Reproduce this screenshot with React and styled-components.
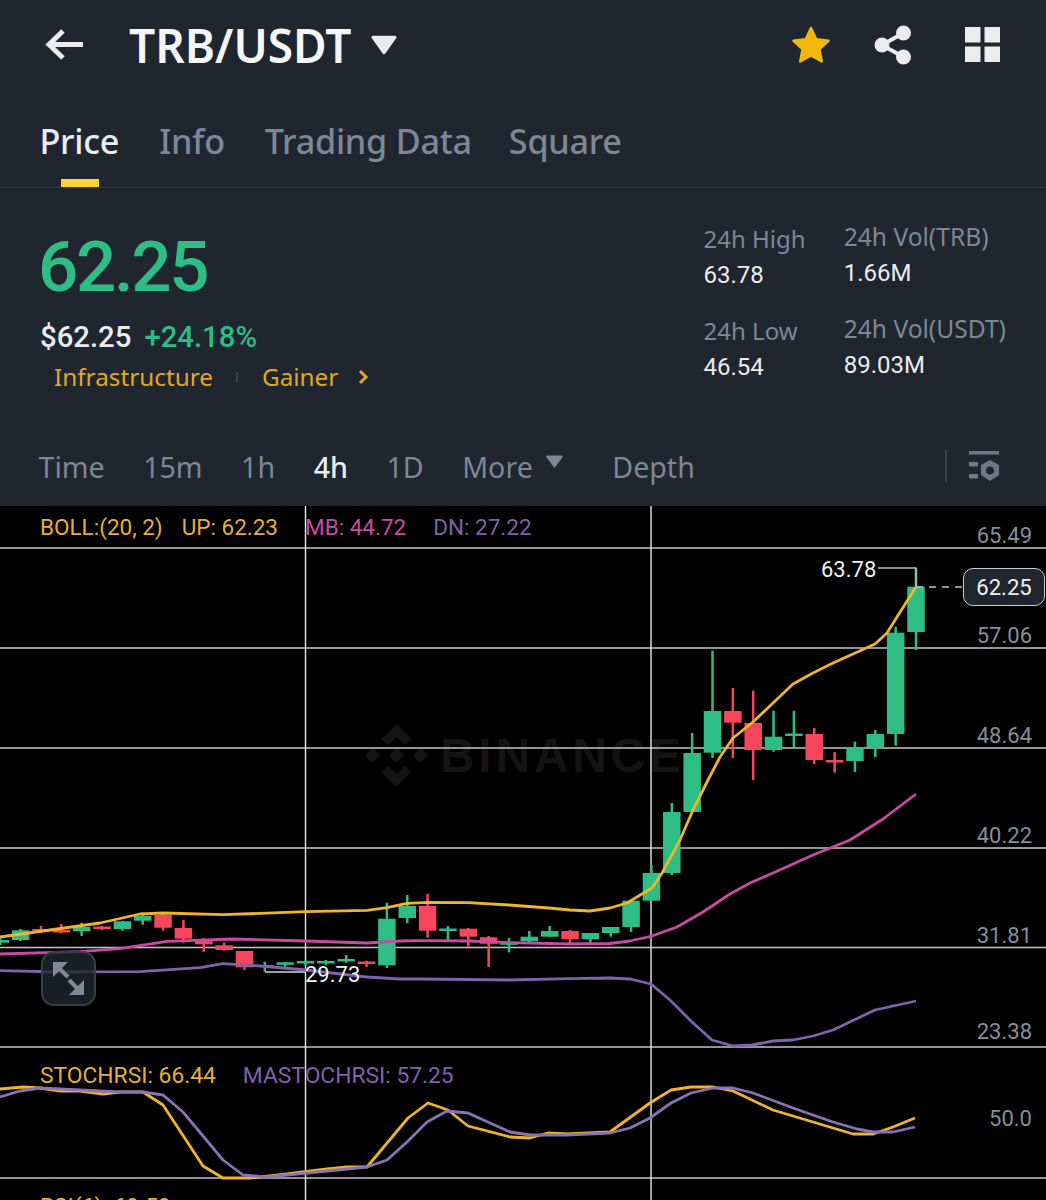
import React from 'react';
import styled, { createGlobalStyle } from 'styled-components';

const GlobalStyle = createGlobalStyle`
  html, body {
    margin: 0;
    padding: 0;
    background: #000;
    font-family: "Noto Sans", "Open Sans", sans-serif;
  }
`;

const Page = styled.div`
  width: 1046px;
  height: 1200px;
  overflow: hidden;
  display: flex;
  flex-direction: column;
`;

const Header = styled.header`
  height: 506px;
  flex: none;
  background: #1f2630;
  display: flex;
  flex-direction: column;
`;

const TopBar = styled.div`
  height: 90px;
  flex: none;
  display: flex;
  align-items: center;
  padding: 0 45px;
  color: #eaecef;
`;

const Title = styled.h1`
  margin: 0 19px 0 46px;
  font-size: 46px;
  font-weight: 600;
  color: #f5f6f8;
`;

const TopActions = styled.div`
  margin-left: auto;
  display: flex;
  align-items: center;
  gap: 43px;
`;

const GridButton = styled.span`
  display: flex;
  margin-left: 10px;
`;

const Tabs = styled.nav`
  height: 98px;
  flex: none;
  box-sizing: border-box;
  display: flex;
  align-items: flex-start;
  gap: 40px;
  padding: 27px 0 0 39.5px;
  border-bottom: 1px solid #353b46;
`;

const Tab = styled.span`
  position: relative;
  margin-left: ${(p) => p.$pull || 0}px;
  font-size: 34.2px;
  line-height: 48px;
  font-weight: 500;
  letter-spacing: -0.25px;
  color: ${(p) => (p.$active ? '#eaecef' : '#7d8796')};

  &::after {
    content: ${(p) => (p.$active ? '""' : 'none')};
    position: absolute;
    left: 21.5px;
    top: 62px;
    width: 38px;
    height: 8px;
    background: #fcd535;
  }
`;

const Summary = styled.section`
  height: 242px;
  flex: none;
  display: flex;
  justify-content: space-between;
  padding: 0 40px;
`;

const PriceBlock = styled.div`
  display: flex;
  flex-direction: column;
  padding-top: 37px;
`;

const BigPrice = styled.div`
  margin-left: -2px;
  font-family: Roboto, "Noto Sans", sans-serif;
  font-size: 71px;
  line-height: 84px;
  font-weight: 500;
  letter-spacing: -2.4px;
  color: #2ebd85;
`;

const SubPrice = styled.div`
  display: flex;
  align-items: baseline;
  gap: 13px;
  margin-top: 9px;
  font-family: Roboto, "Noto Sans", sans-serif;
  font-size: 29.3px;
  line-height: 38px;
  font-weight: 500;
  color: #eaecef;
`;

const Change = styled.span`
  color: #2ebd85;
`;

const TagRow = styled.div`
  display: flex;
  align-items: center;
  margin: 3px 0 0 14px;
  font-size: 24.3px;
  line-height: 36px;
  color: #dfa91f;
`;

const TagDivider = styled.i`
  width: 2px;
  height: 10px;
  margin: 0 24px 0 23px;
  background: #3c434f;
`;

const TagChevron = styled.span`
  display: flex;
  margin-left: 20px;
`;

const Stats = styled.div`
  display: flex;
  gap: 38px;
`;

const StatColumn = styled.div`
  display: flex;
  flex-direction: column;
  gap: 20px;
  padding-top: ${(p) => p.$top}px;
`;

const Stat = styled.div`
  display: flex;
  flex-direction: column;
`;

const StatLabel = styled.span`
  font-size: ${(p) => p.$size || 24}px;
  line-height: 35px;
  color: #7d8796;
`;

const StatValue = styled.span`
  margin-top: 2px;
  font-family: Roboto, "Noto Sans", sans-serif;
  font-size: 24px;
  line-height: 35px;
  color: #eaecef;
`;

const IntervalBar = styled.div`
  flex: 1;
  display: flex;
  align-items: center;
  gap: 38.5px;
  padding: 0 46px 4px 38.5px;
  font-size: 28.6px;
  color: #7d8796;
`;

const Interval = styled.span`
  font-weight: ${(p) => (p.$active ? 500 : 400)};
  color: ${(p) => (p.$active ? '#eaecef' : '#7d8796')};
`;

const MoreInterval = styled(Interval)`
  display: flex;
  align-items: center;
  gap: 13px;
  margin-right: 11px;
`;

const MoreCaret = styled.span`
  display: flex;
  margin-top: -10px;
`;

const BarTools = styled.div`
  margin-left: auto;
  display: flex;
  align-items: center;
  gap: 21px;
`;

const ToolDivider = styled.i`
  width: 2px;
  height: 32px;
  background: #3c434f;
`;

const Chart = styled.section`
  position: relative;
  flex: 1;
  background: #000;
  overflow: hidden;
`;

const Watermark = styled.div`
  position: absolute;
  left: 365px;
  top: 218px;
  display: flex;
  align-items: center;
  gap: 12px;
  color: #141414;
`;

const WatermarkText = styled.span`
  font-family: "Liberation Sans", sans-serif;
  font-size: 48px;
  font-weight: 700;
  letter-spacing: 3.7px;
`;

const ChartCanvas = styled.svg`
  position: absolute;
  inset: 0;
  width: 1046px;
  height: 694px;
`;

const Legend = styled.div`
  position: absolute;
  left: 40px;
  top: ${(p) => p.$top}px;
  display: flex;
  gap: 27px;
  font-family: Roboto, "Noto Sans", sans-serif;
  font-size: ${(p) => p.$size}px;
  line-height: 30px;
  white-space: nowrap;
`;

const LegendItem = styled.span`
  color: ${(p) => p.$color};
  margin-right: ${(p) => p.$pull || 0}px;
`;

const AxisLabel = styled.span`
  position: absolute;
  right: 14px;
  top: ${(p) => p.$y - 506 - 14}px;
  font-family: Roboto, "Noto Sans", sans-serif;
  font-size: 22px;
  line-height: 30px;
  color: #848e9c;
`;

const PriceNote = styled.span`
  position: absolute;
  left: ${(p) => p.$x}px;
  top: ${(p) => p.$y - 506 - 14}px;
  font-family: Roboto, "Noto Sans", sans-serif;
  font-size: 22px;
  line-height: 30px;
  color: #f0f1f2;
`;

const LastPrice = styled.span`
  position: absolute;
  left: 963px;
  top: 62px;
  box-sizing: border-box;
  width: 82px;
  height: 38px;
  display: flex;
  align-items: center;
  justify-content: center;
  border: 1.5px solid #c9ccd1;
  border-radius: 10px;
  background: #1f2630;
  font-family: Roboto, "Noto Sans", sans-serif;
  font-size: 22px;
  color: #f0f1f2;
`;

const ExpandButton = styled.button`
  position: absolute;
  left: 41px;
  top: 445px;
  box-sizing: border-box;
  width: 55px;
  height: 55px;
  padding: 0;
  display: flex;
  align-items: center;
  justify-content: center;
  background: rgba(31, 38, 48, 0.78);
  border: 2px solid #383f4b;
  border-radius: 13px;
`;

// [top of body, bottom of body, wick high, wick low, up?] in page pixels, oldest first
const candles = [
  [940, 942.7, 937, 945, 1],
  [930.3, 940, 929, 941, 1],
  [929, 931.5, 926, 933, 0],
  [930, 932.5, 924, 933.3, 0],
  [927, 931.3, 922.7, 936, 1],
  [926.5, 929, 926, 930, 0],
  [921.3, 929, 921, 930.7, 1],
  [916, 920.7, 912.7, 924.7, 1],
  [915, 927.7, 913, 930.7, 0],
  [928, 938.7, 920, 942.7, 0],
  [939.3, 944.3, 938, 951.7, 0],
  [945.3, 950, 942.7, 950.7, 0],
  [951, 967.3, 951, 970, 0],
  [965, 967, 961.7, 971.7, 1],
  [962.3, 964.8, 962, 967.3, 1],
  [961, 963.5, 960, 965, 1],
  [961, 963.5, 960, 965, 1],
  [959, 961.5, 955, 962.7, 1],
  [961.5, 964, 960.7, 967, 0],
  [918.7, 965.3, 902.7, 968, 1],
  [906, 918, 895, 923, 1],
  [906, 930.7, 894, 937.7, 0],
  [928.5, 931, 926, 940, 1],
  [928.7, 936.7, 928, 946.7, 0],
  [937.3, 943.7, 936, 967, 0],
  [942.3, 944.8, 938, 952.3, 1],
  [936.7, 941.3, 931, 943, 1],
  [931, 936.7, 926, 937, 1],
  [931, 939.3, 930, 945, 0],
  [933, 939.3, 933, 945, 1],
  [927, 933, 927, 936.7, 1],
  [900.7, 927, 900.7, 932, 1],
  [873, 900.7, 865, 900.7, 1],
  [812, 873, 803, 875, 1],
  [753, 812, 733, 812, 1],
  [711, 752.7, 650.7, 758, 1],
  [711, 722.7, 688, 758, 0],
  [723, 750, 690.7, 780, 0],
  [736.7, 750, 710.7, 751.7, 1],
  [733.5, 736, 710.7, 747, 1],
  [734, 760, 728, 764, 0],
  [760, 762.5, 752, 772.7, 0],
  [747.7, 761, 741.7, 772, 1],
  [734, 747.7, 730, 757, 1],
  [632.7, 734, 626.7, 745.7, 1],
  [586.7, 632, 568, 650, 1],
];

const upperBand = '0,937 50,930 100,923 140,914 163,913 223,914.7 306,911.7 367,910.3 387,907.7 407,903.3 428,902.3 468,902.7 509,905 549,908 570,910 590,911 610,908 627,903 652,888 662,873 680,840 693,810 708,780 720,757 733,738 753,722 773,703 793,684 813,673 833,663 853,654 875,644 887,633 897,617 916,587';
const midBand = '0,954 80,951.7 120,948.7 167,941.3 233,939 306,941 367,943 400,941 420,940.7 470,941 510,942.7 570,944 610,943.5 630,941 652,936 677,927 703,912 730,894 750,883 773,873 813,855 850,840 883,819 916,794';
const lowerBand = '0,970.7 60,972 140,971.7 200,967.7 223,963.7 260,966 306,970 367,977 400,979 420,979 509,980 570,978.7 610,978 630,979 651,984 670,1000 692,1022 712,1040 733,1046 752,1045 773,1041 793,1040 813,1036 833,1030 875,1010 916,1001';
const stochLine = '0,1089 23,1087 40,1088 60,1091 80,1091 103,1094 120,1092 143,1092 163,1105 203,1166 223,1178 250,1178 287,1174 327,1169 347,1167 367,1167 408,1118 428,1103 448,1110 468,1126 510,1137 530,1138 548,1133 567,1134 610,1132 650,1103 671,1090 691,1087 713,1087 733,1091 773,1110 813,1122 853,1134 873,1134 893,1127 915,1118';
const stochAvgLine = '0,1097 20,1091 40,1088 80,1090 120,1092 143,1092 163,1095 183,1112 223,1160 243,1175 267,1177 307,1173 367,1167 387,1160 407,1142 427,1122 447,1111 468,1113 510,1132 530,1135 567,1135 610,1133 630,1128 650,1118 671,1103 691,1093 713,1088 733,1088 753,1093 793,1108 833,1122 857,1129 873,1132 893,1132 915,1127';

const gridRows = [548, 648, 748, 848, 947.5, 1047, 1178];
const gridColumns = [305.5, 651];
const axisLabels = [
  ['65.49', 535],
  ['57.06', 635],
  ['48.64', 735],
  ['40.22', 835],
  ['31.81', 935],
  ['23.38', 1031],
  ['50.0', 1118],
];

const BackIcon = () => (
  <svg width="38" height="32" viewBox="0 0 38 32" fill="none" stroke="currentColor" strokeWidth="5">
    <path d="M38 15.5H4" />
    <path d="M18 2 4 15.5 18 29" />
  </svg>
);

const Caret = ({ width, height, color }) => (
  <svg width={width} height={height} viewBox="0 0 24 18">
    <path d="M2 2h20L12 16z" fill={color} stroke={color} strokeWidth="3" strokeLinejoin="round" />
  </svg>
);

const StarIcon = () => (
  <svg width="40" height="40" viewBox="0 0 40 40">
    <path
      d="M20 3l5.2 11.3 12.3 1.5-9.1 8.4 2.4 12.2L20 30.3 9.2 36.4l2.4-12.2-9.1-8.4 12.3-1.5z"
      fill="#f0b90b"
      stroke="#f0b90b"
      strokeWidth="2.5"
      strokeLinejoin="round"
    />
  </svg>
);

const ShareIcon = () => (
  <svg width="38" height="40" viewBox="0 0 38 40" fill="#eaecef" stroke="#eaecef">
    <circle cx="8" cy="20" r="7.5" stroke="none" />
    <circle cx="29.5" cy="8" r="7.5" stroke="none" />
    <circle cx="29.5" cy="32" r="7.5" stroke="none" />
    <path d="M8 20 29.5 8M8 20l21.5 12" strokeWidth="4" fill="none" />
  </svg>
);

const GridIcon = () => (
  <svg width="36" height="36" viewBox="0 0 36 36" fill="#eaecef">
    <rect x="0" y="0" width="15.5" height="15.5" />
    <rect x="19.5" y="0" width="15.5" height="15.5" />
    <rect x="0" y="19.5" width="15.5" height="15.5" />
    <rect x="19.5" y="19.5" width="15.5" height="15.5" />
  </svg>
);

const ChevronIcon = () => (
  <svg width="12" height="16" viewBox="0 0 12 16" fill="none" stroke="#dfa91f" strokeWidth="3">
    <path d="M2 2l6 6-6 6" />
  </svg>
);

const IndicatorIcon = () => (
  <svg width="32" height="32" viewBox="0 0 32 32" fill="#6f7885">
    <rect x="1" y="1" width="30" height="3.5" />
    <rect x="1" y="12" width="9" height="4.5" />
    <rect x="1" y="24" width="9" height="4.5" />
    <path fillRule="evenodd" d="M22 10l9 5v10l-9 6-9-6V15zM22 16.5a4 4 0 1 0 0 8 4 4 0 0 0 0-8z" />
  </svg>
);

const ExpandIcon = () => (
  <svg width="36" height="36" viewBox="0 0 36 36" fill="#7e8896" stroke="#7e8896">
    <path d="M2 1h15L2 16z" stroke="none" />
    <path d="M33 34H18L33 19z" stroke="none" />
    <path d="M8 7l9 9M27 28l-9-9" strokeWidth="4" fill="none" />
  </svg>
);

const BinanceMark = () => (
  <svg width="63" height="63" viewBox="0 0 63 63" fill="#141414">
    <path d="M31.5 0 46.5 15 40 21.5 31.5 13 23 21.5 16.5 15z" />
    <path d="M31.5 63 46.5 48 40 41.5 31.5 50 23 41.5 16.5 48z" />
    <path d="M31.5 24 39 31.5 31.5 39 24 31.5z" />
    <path d="M7.5 24 15 31.5 7.5 39 0 31.5z" />
    <path d="M55.5 24 63 31.5 55.5 39 48 31.5z" />
  </svg>
);

const Band = ({ points, color }) => (
  <polyline points={points} fill="none" stroke={color} strokeWidth="2.8" strokeLinejoin="round" />
);

const App = () => {
  const firstX = 916 - 20.35 * (candles.length - 1);

  return (
    <Page>
      <GlobalStyle />
      <Header>
        <TopBar>
          <BackIcon />
          <Title>TRB/USDT</Title>
          <Caret width={26} height={20} color="#eaecef" />
          <TopActions>
            <StarIcon />
            <ShareIcon />
            <GridButton>
              <GridIcon />
            </GridButton>
          </TopActions>
        </TopBar>

        <Tabs>
          <Tab $active>Price</Tab>
          <Tab>Info</Tab>
          <Tab>Trading Data</Tab>
          <Tab $pull={-3}>Square</Tab>
        </Tabs>

        <Summary>
          <PriceBlock>
            <BigPrice>62.25</BigPrice>
            <SubPrice>
              $62.25 <Change>+24.18%</Change>
            </SubPrice>
            <TagRow>
              Infrastructure
              <TagDivider />
              Gainer
              <TagChevron>
                <ChevronIcon />
              </TagChevron>
            </TagRow>
          </PriceBlock>
          <Stats>
            <StatColumn $top={33}>
              <Stat>
                <StatLabel>24h High</StatLabel>
                <StatValue>63.78</StatValue>
              </Stat>
              <Stat>
                <StatLabel>24h Low</StatLabel>
                <StatValue>46.54</StatValue>
              </Stat>
            </StatColumn>
            <StatColumn $top={31}>
              <Stat>
                <StatLabel $size={24.6}>24h Vol(TRB)</StatLabel>
                <StatValue>1.66M</StatValue>
              </Stat>
              <Stat>
                <StatLabel $size={24.6}>24h Vol(USDT)</StatLabel>
                <StatValue>89.03M</StatValue>
              </Stat>
            </StatColumn>
          </Stats>
        </Summary>

        <IntervalBar>
          <Interval>Time</Interval>
          <Interval>15m</Interval>
          <Interval>1h</Interval>
          <Interval $active>4h</Interval>
          <Interval>1D</Interval>
          <MoreInterval>
            More
            <MoreCaret>
              <Caret width={17} height={13} color="#7d8796" />
            </MoreCaret>
          </MoreInterval>
          <Interval>Depth</Interval>
          <BarTools>
            <ToolDivider />
            <IndicatorIcon />
          </BarTools>
        </IntervalBar>
      </Header>

      <Chart>
        <Watermark>
          <BinanceMark />
          <WatermarkText>BINANCE</WatermarkText>
        </Watermark>

        <ChartCanvas viewBox="0 506 1046 694">
          {gridRows.map((y) => (
            <line key={y} x1="0" x2="1046" y1={y} y2={y} stroke="#c4c4c4" strokeWidth="1.6" />
          ))}
          {gridColumns.map((x) => (
            <line key={x} x1={x} x2={x} y1="506" y2="1200" stroke="#e8e8e8" strokeWidth="1.4" />
          ))}

          {candles.map(([top, bottom, high, low, up], i) => {
            const x = firstX + 20.35 * i;
            const color = up ? '#2ebd85' : '#f6465d';
            return (
              <g key={x} fill={color}>
                <rect x={x - 1.25} y={high} width="2.5" height={low - high} />
                <rect x={x - 8.75} y={top} width="17.5" height={bottom - top} />
              </g>
            );
          })}

          <polyline points="265,972 305,972" stroke="#d8d8d8" strokeWidth="1.5" fill="none" />
          <polyline points="878,568 916,568 916,586" stroke="#b8c0b8" strokeWidth="1.5" fill="none" />
          <line x1="916" x2="963" y1="587" y2="587" stroke="#c4c4c4" strokeWidth="1.5" strokeDasharray="7 6" />

          <Band points={upperBand} color="#f0b429" />
          <Band points={midBand} color="#c94aa4" />
          <Band points={lowerBand} color="#7f62ad" />
          <Band points={stochLine} color="#f0b429" />
          <Band points={stochAvgLine} color="#8a72b8" />
        </ChartCanvas>

        <Legend $top={6} $size={22.5}>
          <LegendItem $color="#e5b035" $pull={-8}>BOLL:(20, 2)</LegendItem>
          <LegendItem $color="#e5b035">UP: 62.23</LegendItem>
          <LegendItem $color="#c94aa4">MB: 44.72</LegendItem>
          <LegendItem $color="#7f62ad">DN: 27.22</LegendItem>
        </Legend>
        <Legend $top={555} $size={22.8}>
          <LegendItem $color="#e5b035">STOCHRSI: 66.44</LegendItem>
          <LegendItem $color="#7f62ad">MASTOCHRSI: 57.25</LegendItem>
        </Legend>
        <Legend $top={686} $size={22.8}>
          <LegendItem $color="#e5b035">RSI(6): 69.59</LegendItem>
        </Legend>

        {axisLabels.map(([label, y]) => (
          <AxisLabel key={label} $y={y}>
            {label}
          </AxisLabel>
        ))}
        <PriceNote $x={821} $y={569}>63.78</PriceNote>
        <PriceNote $x={305} $y={974}>29.73</PriceNote>
        <LastPrice>62.25</LastPrice>

        <ExpandButton aria-label="Expand chart">
          <ExpandIcon />
        </ExpandButton>
      </Chart>
    </Page>
  );
};

export default App;
